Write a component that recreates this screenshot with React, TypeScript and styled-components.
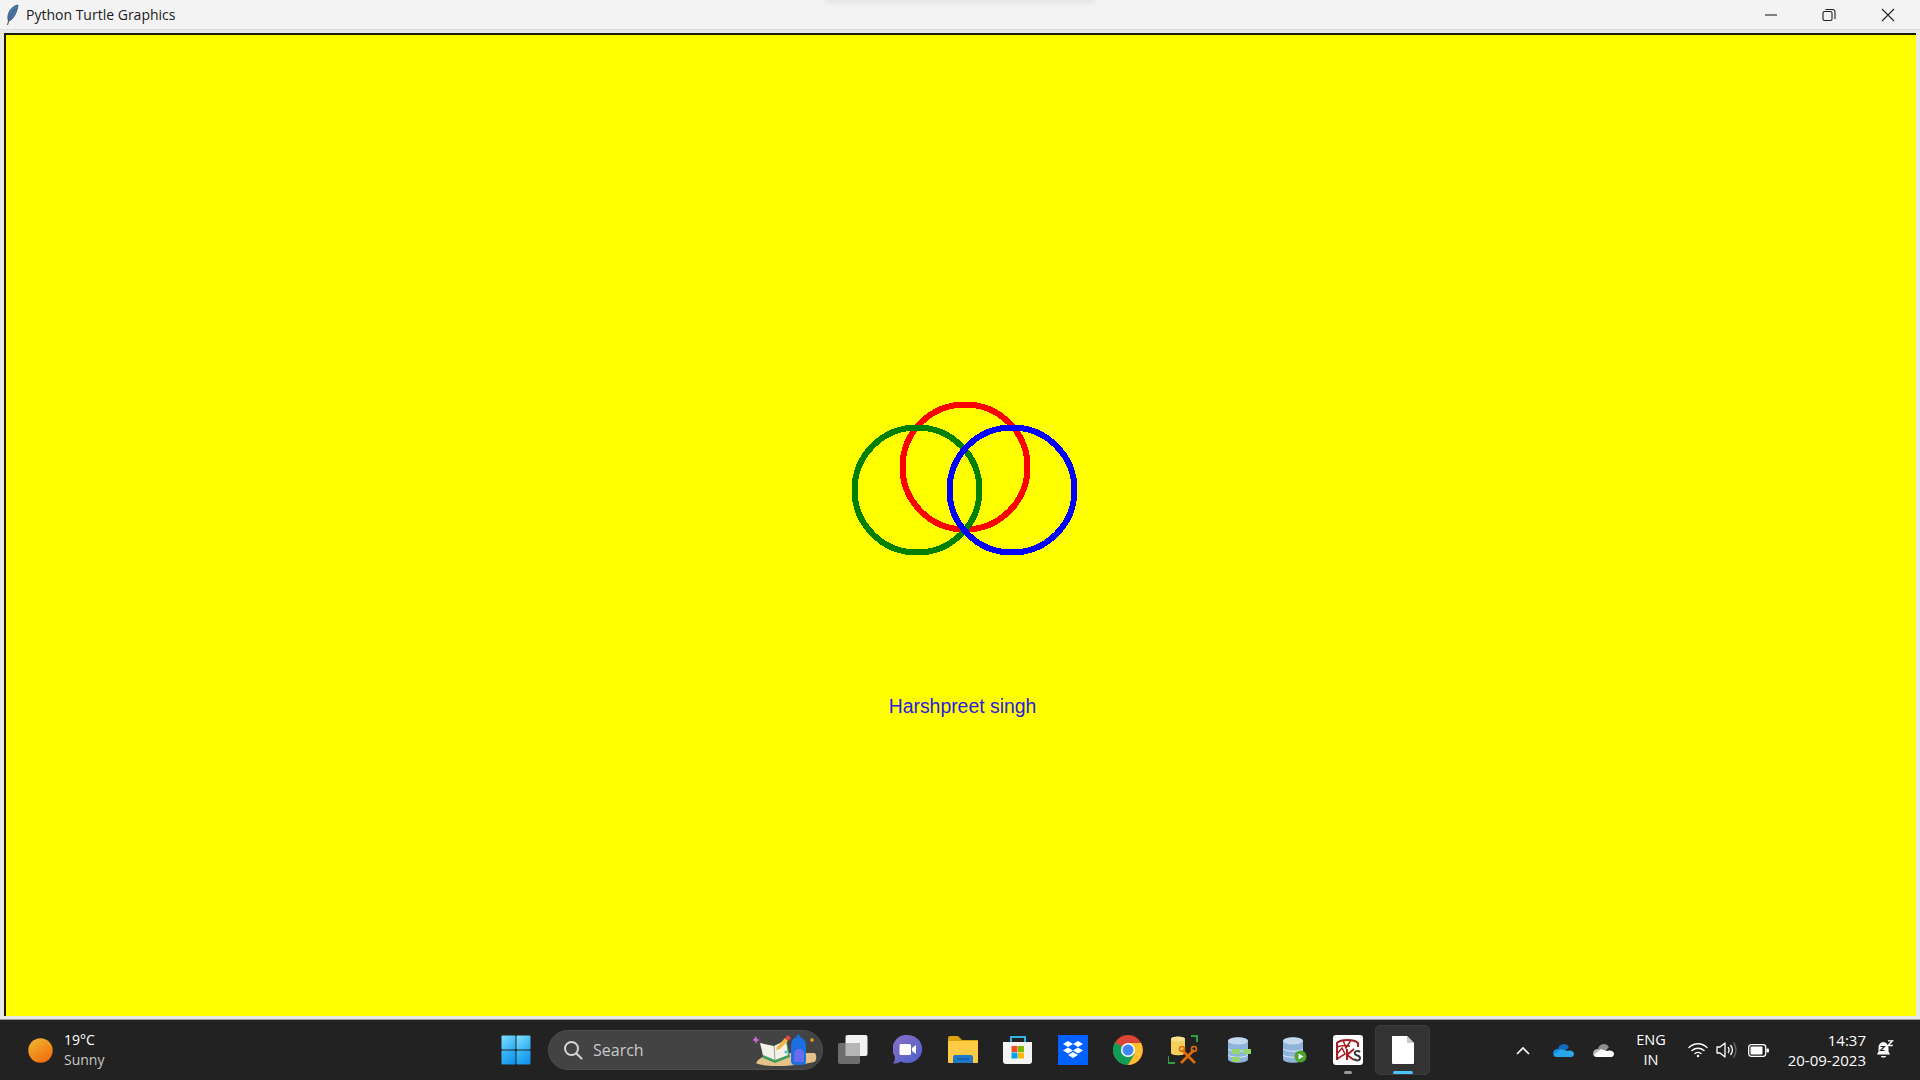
import React from 'react';
import styled, { createGlobalStyle } from 'styled-components';

const GlobalStyle = createGlobalStyle`
    html, body {
        margin: 0;
        padding: 0;
        height: 100%;
        overflow: hidden;
        background: #f0f0f0;
    }
`;

const UI_FONT = `'Open Sans', 'Noto Sans', sans-serif`;

const App = () => (
    <Screen>
        <GlobalStyle />
        <TitleBar>
            <TitleLeft>
                <FeatherIcon />
                <TitleText>Python Turtle Graphics</TitleText>
            </TitleLeft>
            <Smudge />
            <WindowButtons>
                <WindowButton>
                    <svg width="14" height="14" viewBox="0 0 14 14">
                        <path d="M1 7h12" stroke="#222" strokeWidth="1.1" />
                    </svg>
                </WindowButton>
                <WindowButton>
                    <svg width="14" height="14" viewBox="0 0 14 14" fill="none" stroke="#222" strokeWidth="1.1">
                        <rect x="1" y="3.5" width="9" height="9" rx="1.5" />
                        <path d="M3.5 1.5h7a2.5 2.5 0 0 1 2.5 2.5v7" />
                    </svg>
                </WindowButton>
                <WindowButton>
                    <svg width="14" height="14" viewBox="0 0 14 14">
                        <path d="M1 1l12 12M13 1L1 13" stroke="#222" strokeWidth="1.1" />
                    </svg>
                </WindowButton>
            </WindowButtons>
        </TitleBar>
        <CanvasFrame>
            <Canvas>
                <Circles />
                <Signature>Harshpreet singh</Signature>
            </Canvas>
        </CanvasFrame>
        <Taskbar>
            <Weather>
                <Sun />
                <WeatherText>
                    <Temp>19°C</Temp>
                    <Condition>Sunny</Condition>
                </WeatherText>
            </Weather>
            <Center>
                <StartIcon />
                <SearchBox>
                    <svg width="20" height="20" viewBox="0 0 20 20" fill="none" stroke="#d6d6d6" strokeWidth="2">
                        <circle cx="8.5" cy="8.5" r="6.5" />
                        <path d="M13.5 13.5l5 5" strokeLinecap="round" />
                    </svg>
                    <SearchLabel>Search</SearchLabel>
                    <SearchArt />
                </SearchBox>
                <AppSlots>
                    <AppSlot><TaskViewIcon /></AppSlot>
                    <AppSlot><ChatIcon /></AppSlot>
                    <AppSlot><FolderIcon /></AppSlot>
                    <AppSlot><StoreIcon /></AppSlot>
                    <AppSlot><DropboxIcon /></AppSlot>
                    <AppSlot><ChromeIcon /></AppSlot>
                    <AppSlot><WorkbenchIcon /></AppSlot>
                    <AppSlot><DbIcon variant="grid" /></AppSlot>
                    <AppSlot><DbIcon variant="play" /></AppSlot>
                    <AppSlot dot><SketchIcon /></AppSlot>
                    <AppSlot active><NotepadIcon /></AppSlot>
                </AppSlots>
            </Center>
            <Tray>
                <TrayIcon $width={26}>
                    <svg width="14" height="9" viewBox="0 0 14 9" fill="none" stroke="#fff" strokeWidth="1.6">
                        <path d="M1 8l6-6 6 6" />
                    </svg>
                </TrayIcon>
                <TrayIcon $width={54}><CloudIcon top="#0f6cbd" left="#1490df" bottom="#28a8ea" /></TrayIcon>
                <TrayIcon $width={26}><CloudIcon top="#8f8f8f" left="#b5b5b5" bottom="#ffffff" /></TrayIcon>
                <Language>
                    <span>ENG</span>
                    <span>IN</span>
                </Language>
                <TrayIcon $width={28}><WifiIcon /></TrayIcon>
                <TrayIcon $width={28}><VolumeIcon /></TrayIcon>
                <TrayIcon $width={36}><BatteryIcon /></TrayIcon>
                <Clock>
                    <span>14:37</span>
                    <span>20-09-2023</span>
                </Clock>
                <BellWrap><BellIcon /></BellWrap>
            </Tray>
        </Taskbar>
    </Screen>
);

export default App;

const FeatherIcon = () => (
    <svg width="16" height="22" viewBox="0 0 16 22">
        <path d="M14 1C9 2 5 6 4 12c-.3 2 0 4 .7 5 5-1.500 8.300-9 9.300-16z" fill="#3d7cc0" stroke="#4a5566" strokeWidth="1" />
        <path d="M11 5C8 9 5 14 3.500 21" stroke="#555" strokeWidth="1.1" fill="none" />
    </svg>
);

const Circles = () => (
    <svg width="232" height="160" viewBox="0 0 232 160" fill="none" strokeWidth="6" shapeRendering="crispEdges">
        <circle cx="115" cy="66" r="62.5" stroke="#ff0000" />
        <circle cx="67" cy="89" r="62.5" stroke="#008000" />
        <circle cx="162" cy="89" r="62.5" stroke="#0000ff" />
    </svg>
);

const Sun = () => (
    <svg width="25" height="25" viewBox="0 0 25 25">
        <defs>
            <linearGradient id="sunFill" x1="0.2" y1="0" x2="0.8" y2="1">
                <stop offset="0" stopColor="#f2b32d" />
                <stop offset="1" stopColor="#f06a0c" />
            </linearGradient>
        </defs>
        <circle cx="12.5" cy="12.5" r="12.2" fill="url(#sunFill)" />
    </svg>
);

const StartIcon = () => (
    <svg width="30" height="30" viewBox="0 0 30 30">
        <defs>
            <linearGradient id="winA" x1="0" y1="0" x2="1" y2="1">
                <stop offset="0" stopColor="#7fe0ff" />
                <stop offset="1" stopColor="#2aa9f2" />
            </linearGradient>
            <linearGradient id="winB" x1="0" y1="0" x2="1" y2="1">
                <stop offset="0" stopColor="#3fbdf8" />
                <stop offset="1" stopColor="#0e8fea" />
            </linearGradient>
        </defs>
        <rect x="0.5" y="0.5" width="14" height="14" rx="1" fill="url(#winA)" />
        <rect x="15.5" y="0.5" width="14" height="14" rx="1" fill="url(#winA)" />
        <rect x="0.5" y="15.5" width="14" height="14" rx="1" fill="url(#winB)" />
        <rect x="15.5" y="15.5" width="14" height="14" rx="1" fill="url(#winB)" />
    </svg>
);

const SearchArt = () => (
    <SearchArtWrap>
        <svg width="66" height="34" viewBox="0 0 66 34">
            <path d="M3 30c4-8 18-10 36-10h22c3 0 3 8 0 9-14 4-50 6-58 1z" fill="#e5c189" />
            <path d="M1 6l2-3 1 3 3 1-3 1-1 3-1-3-3-1z" fill="#d867e0" />
            <path d="M8 12l13 3 13-6 3 15-15 6-12-5z" fill="#3f9e5b" />
            <path d="M7 10l14 3 12-6 2 15-13 5-12-5z" fill="#f3f1e8" />
            <path d="M21 13l1 14" stroke="#9aa39a" strokeWidth="1" />
            <path d="M24 14l8-9 3 3-8 8-4 1z" fill="#f0b54a" />
            <path d="M32 5l3-3 3 3-3 3z" fill="#e0483e" />
            <circle cx="33" cy="19" r="1.6" fill="#4cc3d9" />
            <path d="M38 28V13c0-6 3-9 7-9s8 3 8 9v15c0 3-2 4-4 4h-7c-2 0-4-1-4-4z" fill="#1c6fe0" />
            <path d="M43 4l2-3 3 3z" fill="#1c6fe0" />
            <path d="M41 29v-8c0-3 2-5 5-5s5 2 5 5v8z" fill="#6b6bf0" />
            <circle cx="59" cy="7" r="1.8" fill="#f0a020" />
        </svg>
    </SearchArtWrap>
);

const TaskViewIcon = () => (
    <svg width="30" height="30" viewBox="0 0 30 30">
        <rect x="7.5" y="0" width="22" height="21" rx="2" fill="#f2f2f2" />
        <rect x="0" y="8" width="22" height="21" rx="2" fill="#6d6d6d" />
        <rect x="7.5" y="8" width="14.5" height="13" fill="#b5b5b5" />
    </svg>
);

const ChatIcon = () => (
    <svg width="30" height="30" viewBox="0 0 30 30">
        <defs>
            <linearGradient id="chatFill" x1="0" y1="0" x2="1" y2="1">
                <stop offset="0" stopColor="#8a70c8" />
                <stop offset="1" stopColor="#4a5fc8" />
            </linearGradient>
        </defs>
        <path d="M15 0a14.5 14 0 1 1-7 26.4C5 28 3 28.5 0 28.5c1.5-2 2-4 1.8-7A14 14 0 0 1 15 0z" fill="url(#chatFill)" />
        <rect x="6.5" y="9" width="11.5" height="11" rx="1.5" fill="#fff" />
        <path d="M19 13l4-3v9l-4-3z" fill="#fff" />
    </svg>
);

const FolderIcon = () => (
    <svg width="30" height="28" viewBox="0 0 30 28">
        <path d="M0 2a2 2 0 0 1 2-2h8l4 4h16v6H0z" fill="#dca10e" />
        <path d="M0 5h30v21a1 1 0 0 1-1 1H1a1 1 0 0 1-1-1z" fill="#ffcb45" />
        <path d="M5 27v-6a2 2 0 0 1 2-2h16a2 2 0 0 1 2 2v6z" fill="#1f78c8" />
        <path d="M9 23h12" stroke="#0f4f8f" strokeWidth="1" />
    </svg>
);

const StoreIcon = () => (
    <svg width="30" height="30" viewBox="0 0 30 30">
        <path d="M8 7V2h14v5" fill="none" stroke="#2fb4ea" strokeWidth="2" />
        <path d="M0 7h29v19a3 3 0 0 1-3 3H3a3 3 0 0 1-3-3z" fill="#f4f4f4" />
        <rect x="8.5" y="11" width="6" height="6" fill="#f25022" />
        <rect x="15" y="11" width="6" height="6" fill="#7fba00" />
        <rect x="8.5" y="17.5" width="6" height="6" fill="#00a4ef" />
        <rect x="15" y="17.5" width="6" height="6" fill="#ffb900" />
    </svg>
);

const DropboxIcon = () => (
    <svg width="30" height="30" viewBox="0 0 30 30">
        <rect width="30" height="30" fill="#0061fe" />
        <path d="M10 6l5 3-5 3-5-3zM20 6l5 3-5 3-5-3zM10 12.5l5 3-5 3-5-3zM20 12.5l5 3-5 3-5-3zM15 17l5 3-5 3-5-3z" fill="#fff" />
    </svg>
);

const ChromeIcon = () => (
    <svg width="30" height="30" viewBox="0 0 30 30">
        <circle cx="15" cy="15" r="15" fill="#db4437" />
        <path d="M15 15L2 7.5A15 15 0 0 0 15 30l6.5-11z" fill="#0f9d58" />
        <path d="M15 8h13a15 15 0 0 1-13 22l6.5-11z" fill="#fbc02d" />
        <circle cx="15" cy="15" r="7" fill="#fff" />
        <circle cx="15" cy="15" r="5.5" fill="#4285f4" />
    </svg>
);

const WorkbenchIcon = () => (
    <svg width="30" height="30" viewBox="0 0 30 30">
        <path d="M0 21v7h7M23 1h6v6" fill="none" stroke="#2f9e44" strokeWidth="2" />
        <path d="M3 4c0-3 14-3 14 0v14c0 3-14 3-14 0z" fill="#f4cf5b" />
        <ellipse cx="10" cy="4" rx="7" ry="2.5" fill="#f8e08e" />
        <path d="M13 28l13-13M27 28L14 15" stroke="#e36c0a" strokeWidth="2.6" />
        <circle cx="26" cy="14" r="2.5" fill="none" stroke="#e36c0a" strokeWidth="1.6" />
        <circle cx="14" cy="14" r="2.5" fill="none" stroke="#e36c0a" strokeWidth="1.6" />
    </svg>
);

const DbIcon = ({ variant }: { variant: 'grid' | 'play' }) => (
    <svg width="28" height="26" viewBox="-4 0 28 26">
        <path d="M0 4c0-5 20-5 20 0v18c0 5-20 5-20 0z" fill="#8eb4dc" />
        <ellipse cx="10" cy="4" rx="10" ry="3.5" fill="#c5d9ee" />
        <path d="M0 12c3 3 17 3 20 0M0 18c3 3 17 3 20 0" fill="none" stroke="#dfe9f4" strokeWidth="1" />
        {variant === 'grid' ? (
            <>
                <rect x="4" y="12" width="8" height="5" fill="#96d46f" />
                <rect x="15" y="12" width="8" height="5" fill="#96d46f" />
                <rect x="4" y="20" width="8" height="5" fill="#96d46f" />
            </>
        ) : (
            <>
                <circle cx="17.5" cy="19.5" r="6" fill="#4aa52a" />
                <path d="M15.5 16.500l5 3-5 3z" fill="#fff" />
            </>
        )}
    </svg>
);

const SketchIcon = () => (
    <svg width="30" height="30" viewBox="0 0 30 30">
        <rect width="30" height="30" rx="3" fill="#fff" />
        <path d="M4 25V8c4-4 17-4 21 0v4" fill="none" stroke="#a61d24" strokeWidth="2" />
        <path d="M4 12c5-2 8-2 13-1M10 5l3 8 5-8M4 19l5-6 3 6-8 5" fill="none" stroke="#a61d24" strokeWidth="1.5" />
        <path d="M14 14v11M21 14l-7 6 7 5" fill="none" stroke="#a61d24" strokeWidth="2" />
        <path d="M27 17c-2-2-6-1-5 2 1 2 5 1 5 4s-4 3-6 1" fill="none" stroke="#333" strokeWidth="2" />
    </svg>
);

const NotepadIcon = () => (
    <svg width="22" height="28" viewBox="0 0 22 28">
        <path d="M0 0h15l7 7v20a1 1 0 0 1-1 1H1a1 1 0 0 1-1-1z" fill="#fff" />
        <path d="M15 0l7 7h-7z" fill="#c9c9c9" />
    </svg>
);

const CloudIcon = ({ top, left, bottom }: { top: string; left: string; bottom: string }) => (
    <svg width="21" height="14" viewBox="0 0 21 14">
        <path d="M5 6a6 6 0 0 1 11-2l-6 7-6-1z" fill={top} />
        <path d="M5 6C2 6 0 8 0 10.5c0 .5.1 1 .3 1.5L9 8z" fill={left} />
        <path d="M.5 12c.5 1 1.5 2 3 2H18c2 0 3-1.5 3-3 0-2-2-3.5-4.5-3.5-1 0-2 .2-3 .5L8 6z" fill={bottom} />
    </svg>
);

const WifiIcon = () => (
    <svg width="20" height="16" viewBox="0 0 20 16" fill="none" stroke="#fff" strokeWidth="1.4" strokeLinecap="round">
        <path d="M1 5.5c5-5 13-5 18 0" />
        <path d="M4 8.5c3.5-3 8.5-3 12 0" />
        <path d="M7 11.5c2-1.5 4-1.5 6 0" />
        <circle cx="10" cy="14" r="1.2" fill="#fff" stroke="none" />
    </svg>
);

const VolumeIcon = () => (
    <svg width="21" height="18" viewBox="0 0 21 18" fill="none" strokeWidth="1.3">
        <path d="M1 6h3l5-4v14l-5-4H1z" stroke="#fff" strokeLinejoin="round" />
        <path d="M12 6c1.3 1.8 1.3 4.2 0 6" stroke="#fff" />
        <path d="M14.5 4c2.3 3 2.3 7 0 10" stroke="#fff" />
        <path d="M17.5 1.5c3.3 4.5 3.3 10.5 0 15" stroke="#666" />
    </svg>
);

const BatteryIcon = () => (
    <svg width="21" height="13" viewBox="0 0 21 13">
        <rect x="0.7" y="0.7" width="17" height="11.6" rx="2.5" fill="none" stroke="#fff" strokeWidth="1.3" />
        <rect x="2.5" y="2.5" width="12" height="8" rx="1" fill="#fff" />
        <rect x="18.5" y="4.5" width="2.5" height="4" rx="1" fill="#fff" />
    </svg>
);

const BellIcon = () => (
    <svg width="18" height="20" viewBox="0 0 18 20">
        <path d="M7 2c-3 .5-4.5 3-4.5 6v3.5L1 14.500h13l-1.5-3V8C12.500 5 10 2 7 2z" fill="#fff" />
        <path d="M5 16h5c0 2-5 2-5 0z" fill="#fff" />
        <path d="M4.5 6.5h4l-4 4h4" fill="none" stroke="#222" strokeWidth="1.2" />
        <path d="M12 .8h4.500l-4.500 4.700h4.800" fill="none" stroke="#fff" strokeWidth="1.3" />
    </svg>
);

const Screen = styled.div`
    width: 1920px;
    height: 1080px;
    display: flex;
    flex-direction: column;
    background: #f0f0f0;
    overflow: hidden;
`;
const TitleBar = styled.div`
    position: relative;
    height: 30px;
    flex: none;
    display: flex;
    align-items: center;
    justify-content: space-between;
    background: #f3f3f3;
    border-bottom: 1px solid #dcdcdc;
    box-sizing: border-box;
`;
const TitleLeft = styled.div`
    display: flex;
    align-items: center;
    gap: 6px;
    padding-left: 4px;
`;
const TitleText = styled.div`
    font-family: ${UI_FONT};
    font-size: 14px;
    color: #1a1a1a;
`;
const Smudge = styled.div`
    position: absolute;
    top: -2px;
    left: 824px;
    width: 272px;
    height: 5px;
    border-radius: 0 0 8px 8px;
    background: #e4e4e4;
    filter: blur(2px);
`;
const WindowButtons = styled.div`
    display: flex;
    padding-right: 3px;
`;
const WindowButton = styled.div`
    width: 58.5px;
    height: 29px;
    display: flex;
    align-items: center;
    justify-content: center;
`;
const CanvasFrame = styled.div`
    flex: none;
    height: 989px;
    box-sizing: border-box;
    padding: 3px 4px 3px 4px;
    background: #e8e8e8;
`;
const Canvas = styled.div`
    height: 100%;
    box-sizing: border-box;
    display: flex;
    flex-direction: column;
    align-items: center;
    background: #ffff00;
    border-top: 2px solid #1a1a00;
    border-left: 2px solid #1a1a00;
    padding: 366px 0 0 10px;
`;
const Signature = styled.div`
    margin-top: 133px;
    margin-right: 7px;
    font-family: 'Liberation Sans', Arial, sans-serif;
    font-size: 19.4px;
    line-height: 24px;
    color: #2a20e0;
`;
const Taskbar = styled.div`
    flex: none;
    height: 61px;
    display: grid;
    grid-template-columns: 501px 934px 1fr;
    align-items: center;
    background: #222222;
    border-top: 1px solid #9a9a9a;
    box-sizing: border-box;
`;
const Weather = styled.div`
    display: flex;
    align-items: center;
    gap: 11px;
    padding-left: 28px;
`;
const WeatherText = styled.div`
    display: flex;
    flex-direction: column;
    font-family: ${UI_FONT};
    font-size: 14px;
    line-height: 20px;
`;
const Temp = styled.span`
    color: #ffffff;
`;
const Condition = styled.span`
    color: #c8c8c8;
`;
const Center = styled.div`
    display: flex;
    align-items: center;
`;
const SearchBox = styled.div`
    position: relative;
    width: 275px;
    height: 40px;
    margin-left: 17px;
    display: flex;
    align-items: center;
    gap: 10px;
    padding-left: 14px;
    box-sizing: border-box;
    background: #434343;
    border: 1px solid #4e4e4e;
    border-radius: 20px;
`;
const SearchLabel = styled.div`
    font-family: ${UI_FONT};
    font-size: 16px;
    color: #c9c9c9;
`;
const SearchArtWrap = styled.div`
    position: absolute;
    right: 3px;
    top: 2px;
    line-height: 0;
`;
const AppSlots = styled.div`
    display: flex;
    margin-left: 2px;
`;
const AppSlot = styled(({ active, dot, ...rest }: { active?: boolean; dot?: boolean; children: React.ReactNode; className?: string }) => (
    <div {...rest} />
))`
    position: relative;
    width: 55px;
    height: 50px;
    display: flex;
    align-items: center;
    justify-content: center;
    border-radius: 5px;
    box-sizing: border-box;
    background: ${({ active }) => (active ? '#333333' : 'transparent')};
    border: 1px solid ${({ active }) => (active ? '#3c3c3c' : 'transparent')};

    &::after {
        content: '';
        position: absolute;
        bottom: 0;
        left: 50%;
        height: 3px;
        border-radius: 2px;
        transform: translateX(-50%);
        display: ${({ active, dot }) => (active || dot ? 'block' : 'none')};
        width: ${({ active }) => (active ? '20px' : '8px')};
        background: ${({ active }) => (active ? '#4cc2ff' : '#9a9a9a')};
    }
`;
const Tray = styled.div`
    display: flex;
    align-items: center;
    padding-left: 75px;
`;
const TrayIcon = styled.div<{ $width: number }>`
    width: ${({ $width }) => $width}px;
    display: flex;
    align-items: center;
    justify-content: center;
`;
const Language = styled.div`
    width: 66px;
    margin-left: 2px;
    display: flex;
    flex-direction: column;
    align-items: center;
    font-family: ${UI_FONT};
    font-size: 14.5px;
    line-height: 20px;
    color: #ffffff;
`;
const Clock = styled.div`
    width: 90px;
    display: flex;
    flex-direction: column;
    align-items: flex-end;
    font-family: ${UI_FONT};
    font-size: 15px;
    line-height: 20px;
    color: #ffffff;
`;
const BellWrap = styled.div`
    margin-left: 10px;
    line-height: 0;
`;
